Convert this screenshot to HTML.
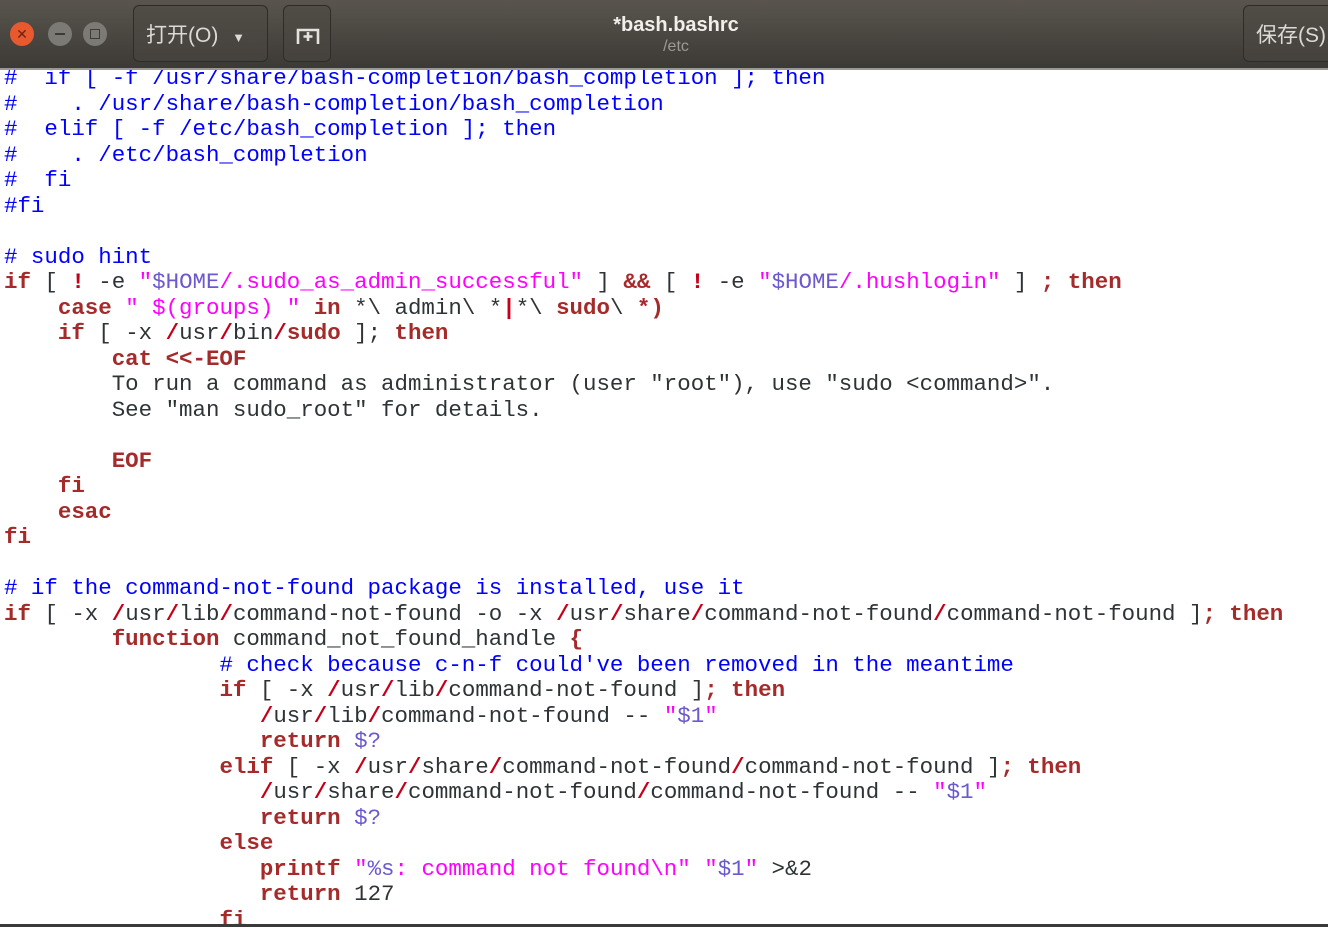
<!DOCTYPE html>
<html><head><meta charset="utf-8"><style>
body{margin:0;width:1328px;height:927px;overflow:hidden;background:#fff;position:relative;font-family:"Liberation Sans","Noto Sans CJK SC",sans-serif}
#hdr{position:absolute;left:0;top:0;width:1328px;height:68px;background:linear-gradient(#59554e,#3c3a36);border-bottom:2px solid #9a9893;z-index:2}
.circ{position:absolute;top:22px;width:24px;height:24px;border-radius:50%}
.btn{position:absolute;top:5px;height:57px;border:1px solid #2e2c29;border-radius:6px;background:linear-gradient(#504c46,#45423d);color:#dcdad5;font-size:21px;line-height:60px;box-sizing:border-box}
pre{position:absolute;left:4px;top:66px;margin:0;font-family:"Liberation Mono",monospace;font-size:22.45px;line-height:25.5px;color:#2e3436;z-index:1}
.k{color:#a52a2a;font-weight:bold}.s{color:#ff00ff}.c{color:#0000ff}.v{color:#6a5acd}.p{color:#c4001a;font-weight:bold}
</style></head><body>
<div id="hdr">
<div class="circ" style="left:10px;background:#e9592e;color:#6b2410;font-size:14px;text-align:center;line-height:24px">✕</div>
<div class="circ" style="left:48px;background:#7c7a75"><div style="position:absolute;left:7px;top:11px;width:10px;height:2px;background:#3d3b37"></div></div>
<div class="circ" style="left:83px;background:#7c7a75"><div style="position:absolute;left:7px;top:7px;width:8px;height:8px;border:1.5px solid #3d3b37"></div></div>
<div class="btn" style="left:133px;width:135px;padding-left:12px">打开(O) <span style="font-size:13px;margin-left:8px">▼</span></div>
<div class="btn" style="left:283px;width:48px"><svg width="48" height="57" viewBox="0 0 48 57"><path d="M14 38V24h20v14M24 26v9M19.5 30.5h9" stroke="#e4e2dd" stroke-width="2.6" fill="none"/></svg></div>
<div style="position:absolute;left:0;width:1352px;top:14px;text-align:center;color:#f0efec;font-weight:bold;font-size:20px">*bash.bashrc</div>
<div style="position:absolute;left:0;width:1352px;top:38px;text-align:center;color:#9c9a95;font-size:16px">/etc</div>
<div class="btn" style="left:1243px;width:100px;padding-left:12px">保存(S)</div>
</div>
<pre><span class="c">#  if [ -f /usr/share/bash-completion/bash_completion ]; then</span>
<span class="c">#    . /usr/share/bash-completion/bash_completion</span>
<span class="c">#  elif [ -f /etc/bash_completion ]; then</span>
<span class="c">#    . /etc/bash_completion</span>
<span class="c">#  fi</span>
<span class="c">#fi</span>

<span class="c"># sudo hint</span>
<span class="k">if</span> [ <span class="p">!</span> -e <span class="s">"<span class="v">$HOME</span>/.sudo_as_admin_successful"</span> ] <span class="k">&amp;&amp;</span> [ <span class="p">!</span> -e <span class="s">"<span class="v">$HOME</span>/.hushlogin"</span> ] <span class="k">;</span> <span class="k">then</span>
    <span class="k">case</span> <span class="s">" $(groups) "</span> <span class="k">in</span> *\ admin\ *<span class="p">|</span>*\ <span class="k">sudo</span>\ <span class="k">*)</span>
    <span class="k">if</span> [ -x <span class="p">/</span>usr<span class="p">/</span>bin<span class="p">/</span><span class="k">sudo</span> ]; <span class="k">then</span>
        <span class="k">cat &lt;&lt;-EOF</span>
        To run a command as administrator (user "root"), use "sudo &lt;command&gt;".
        See "man sudo_root" for details.

        <span class="k">EOF</span>
    <span class="k">fi</span>
    <span class="k">esac</span>
<span class="k">fi</span>

<span class="c"># if the command-not-found package is installed, use it</span>
<span class="k">if</span> [ -x <span class="p">/</span>usr<span class="p">/</span>lib<span class="p">/</span>command-not-found -o -x <span class="p">/</span>usr<span class="p">/</span>share<span class="p">/</span>command-not-found<span class="p">/</span>command-not-found ]<span class="k">;</span> <span class="k">then</span>
        <span class="k">function</span> command_not_found_handle <span class="k">{</span>
                <span class="c"># check because c-n-f could've been removed in the meantime</span>
                <span class="k">if</span> [ -x <span class="p">/</span>usr<span class="p">/</span>lib<span class="p">/</span>command-not-found ]<span class="k">;</span> <span class="k">then</span>
                   <span class="p">/</span>usr<span class="p">/</span>lib<span class="p">/</span>command-not-found -- <span class="s">"<span class="v">$1</span>"</span>
                   <span class="k">return</span> <span class="v">$?</span>
                <span class="k">elif</span> [ -x <span class="p">/</span>usr<span class="p">/</span>share<span class="p">/</span>command-not-found<span class="p">/</span>command-not-found ]<span class="k">;</span> <span class="k">then</span>
                   <span class="p">/</span>usr<span class="p">/</span>share<span class="p">/</span>command-not-found<span class="p">/</span>command-not-found -- <span class="s">"<span class="v">$1</span>"</span>
                   <span class="k">return</span> <span class="v">$?</span>
                <span class="k">else</span>
                   <span class="k">printf</span> <span class="s">"<span class="v">%s</span>: command not found\n"</span> <span class="s">"<span class="v">$1</span>"</span> &gt;&amp;2
                   <span class="k">return</span> 127
                <span class="k">fi</span></pre>
<div style="position:absolute;left:0;top:924px;width:1328px;height:3px;background:#3a3a3a;z-index:3"></div>
</body></html>
